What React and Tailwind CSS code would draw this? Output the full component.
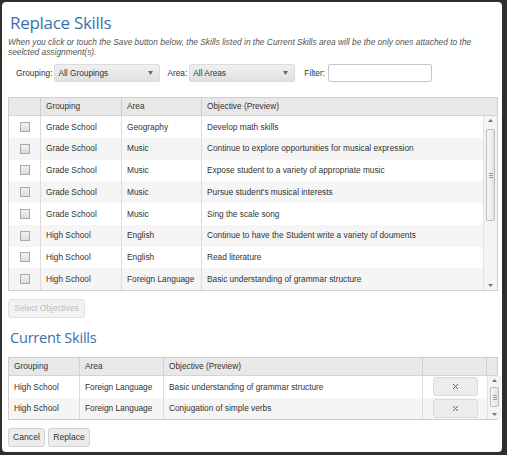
import React from "react";

const rows1 = [
  ["Grade School", "Geography", "Develop math skills"],
  ["Grade School", "Music", "Continue to explore opportunities for musical expression"],
  ["Grade School", "Music", "Expose student to a variety of appropriate music"],
  ["Grade School", "Music", "Pursue student's musical interests"],
  ["Grade School", "Music", "Sing the scale song"],
  ["High School", "English", "Continue to have the Student write a variety of douments"],
  ["High School", "English", "Read literature"],
  ["High School", "Foreign Language", "Basic understanding of grammar structure"],
];

const rows2 = [
  ["High School", "Foreign Language", "Basic understanding of grammar structure"],
  ["High School", "Foreign Language", "Conjugation of simple verbs"],
];

function Arrow({ up }) {
  return (
    <svg width="5" height="3" viewBox="0 0 5 3">
      {up ? <path d="M0 3 L2.5 0 L5 3 Z" fill="#777" /> : <path d="M0 0 L2.5 3 L5 0 Z" fill="#777" />}
    </svg>
  );
}

function Scrollbar({ thumbTop, thumbH }) {
  return (
    <div className="relative w-[14px] shrink-0 bg-[#f4f4f4] border-l border-[#e2e2e2]">
      <div className="absolute top-[3px] left-0 right-0 flex justify-center">
        <Arrow up />
      </div>
      <div
        className="absolute left-[2px] right-[2px] rounded-[2px] border border-[#bdbdbd] bg-gradient-to-r from-[#f8f8f8] to-[#e4e4e4] flex flex-col items-center justify-center gap-[1px]"
        style={{ top: thumbTop, height: thumbH }}
      >
        <div className="w-[4px] h-px bg-[#999]" />
        <div className="w-[4px] h-px bg-[#999]" />
        <div className="w-[4px] h-px bg-[#999]" />
      </div>
      <div className="absolute bottom-[3px] left-0 right-0 flex justify-center">
        <Arrow />
      </div>
    </div>
  );
}

function Checkbox() {
  return <div className="w-[10px] h-[10px] border border-[#a9a9a9] bg-gradient-to-b from-[#f2f2f2] to-[#dcdcdc]" />;
}

function Select({ label, width }) {
  return (
    <div
      className={`${width} h-[18px] flex items-center justify-between pl-[3px] pr-[6px] rounded-[2px] border border-[#dcdcdc] bg-gradient-to-b from-[#f0f0f0] to-[#e0e0e0] text-[#333]`}
    >
      <span>{label}</span>
      <svg width="5" height="4" viewBox="0 0 5 4">
        <path d="M0 0 L2.5 4 L5 0 Z" fill="#666" />
      </svg>
    </div>
  );
}

export default function App() {
  return (
    <div
      className="w-[507px] h-[455px] bg-[#2e2e2e] pl-[2px] pt-[2px] pr-[5px] pb-[3px] text-[8.3px] text-[#333]"
      style={{ fontFamily: '"Liberation Sans", Arial, sans-serif' }}
    >
      <div className="h-full bg-white rounded-[4px] px-[6px] flex flex-col">
        <h1
          className="text-[17px] leading-[24px] text-[#3a70ab] mt-[9px] ml-[2px] tracking-[-0.3px]"
          style={{ fontFamily: '"Open Sans", sans-serif' }}
        >
          Replace Skills
        </h1>
        <p className="italic text-[#555] text-[8.4px] leading-[10px] mt-[2px]">
          When you click or touch the Save button below, the Skills listed in the Current Skills area will be the only ones attached to the
          <br />
          seelcted assignment(s).
        </p>
        <div className="flex items-center mt-[7px] h-[18px]">
          <span className="ml-[8px] mr-[2px]">Grouping:</span>
          <Select label="All Groupings" width="w-[106px]" />
          <span className="ml-[7px] mr-[2px]">Area:</span>
          <Select label="All Areas" width="w-[106px]" />
          <span className="ml-[9px] mr-[3px]">Filter:</span>
          <div className="w-[104px] h-[18px] border border-[#c8c8c8] rounded-[2px] bg-white" />
        </div>

        {/* Table 1 */}
        <div className="mt-[15px] w-[490px] border border-[#cfcfcf]">
          <div className="grid grid-cols-[32px_81px_80px_1fr] h-[18px] bg-[#e8e8e8] border-b border-[#d4d4d4]">
            <div className="border-r border-[#d0d0d0]" />
            <div className="border-r border-[#d0d0d0] flex items-center pl-[5px]">Grouping</div>
            <div className="border-r border-[#d0d0d0] flex items-center pl-[5px]">Area</div>
            <div className="flex items-center pl-[5px]">Objective (Preview)</div>
          </div>
          <div className="flex">
            <div className="flex-1">
              {rows1.map((r, i) => (
                <div
                  key={i}
                  className={`grid grid-cols-[32px_81px_80px_1fr] h-[21.75px] ${i % 2 === 1 ? "bg-[#f5f5f5]" : "bg-white"}`}
                >
                  <div className="border-r border-[#dcdcdc] flex items-center justify-center">
                    <Checkbox />
                  </div>
                  <div className="border-r border-[#dcdcdc] flex items-center pl-[5px]">{r[0]}</div>
                  <div className="border-r border-[#dcdcdc] flex items-center pl-[5px]">{r[1]}</div>
                  <div className="flex items-center pl-[5px]">{r[2]}</div>
                </div>
              ))}
            </div>
            <Scrollbar thumbTop={13} thumbH={92} />
          </div>
        </div>

        <div className="mt-[8px]">
          <button className="w-[77px] h-[19px] rounded-[3px] border border-[#e0e0e0] bg-[#f2f2f2] text-[#bdbdbd] text-[8.3px]">
            Select Objectives
          </button>
        </div>

        <h2
          className="text-[14.5px] leading-[20px] text-[#3a70ab] mt-[10px] ml-[2px] tracking-[-0.2px]"
          style={{ fontFamily: '"Open Sans", sans-serif' }}
        >
          Current Skills
        </h2>

        {/* Table 2 */}
        <div className="mt-[9px] w-[490px] border border-[#cfcfcf]">
          <div className="grid grid-cols-[71px_84px_259px_64px_1fr] h-[18px] bg-[#e8e8e8] border-b border-[#d4d4d4]">
            <div className="border-r border-[#d0d0d0] flex items-center pl-[5px]">Grouping</div>
            <div className="border-r border-[#d0d0d0] flex items-center pl-[5px]">Area</div>
            <div className="border-r border-[#d0d0d0] flex items-center pl-[5px]">Objective (Preview)</div>
            <div className="border-r border-[#d0d0d0]" />
            <div />
          </div>
          <div className="flex">
            <div className="flex-1">
              {rows2.map((r, i) => (
                <div
                  key={i}
                  className={`grid grid-cols-[71px_84px_259px_64px] h-[21.5px] ${i % 2 === 1 ? "bg-[#f5f5f5]" : "bg-white"}`}
                >
                  <div className="border-r border-[#dcdcdc] flex items-center pl-[5px]">{r[0]}</div>
                  <div className="border-r border-[#dcdcdc] flex items-center pl-[5px]">{r[1]}</div>
                  <div className="border-r border-[#dcdcdc] flex items-center pl-[5px]">{r[2]}</div>
                  <div className="flex items-center justify-center">
                    <button className="w-[45px] h-[19px] rounded-[3px] border border-[#dadada] bg-[#ececec] flex items-center justify-center">
                      <svg width="7" height="7" viewBox="0 0 7 7">
                        <path d="M1 1 L6 6 M6 1 L1 6" stroke="#666" strokeWidth="1" />
                      </svg>
                    </button>
                  </div>
                </div>
              ))}
            </div>
            <Scrollbar thumbTop={11} thumbH={20} />
          </div>
        </div>

        <div className="flex gap-[3px] mt-[8px]">
          <button className="w-[37px] h-[19px] rounded-[3px] border border-[#d0d0d0] bg-[#ececec] text-[#333] text-[8.6px]">
            Cancel
          </button>
          <button className="w-[42px] h-[19px] rounded-[3px] border border-[#d0d0d0] bg-[#ececec] text-[#333] text-[8.6px]">
            Replace
          </button>
        </div>
      </div>
    </div>
  );
}
